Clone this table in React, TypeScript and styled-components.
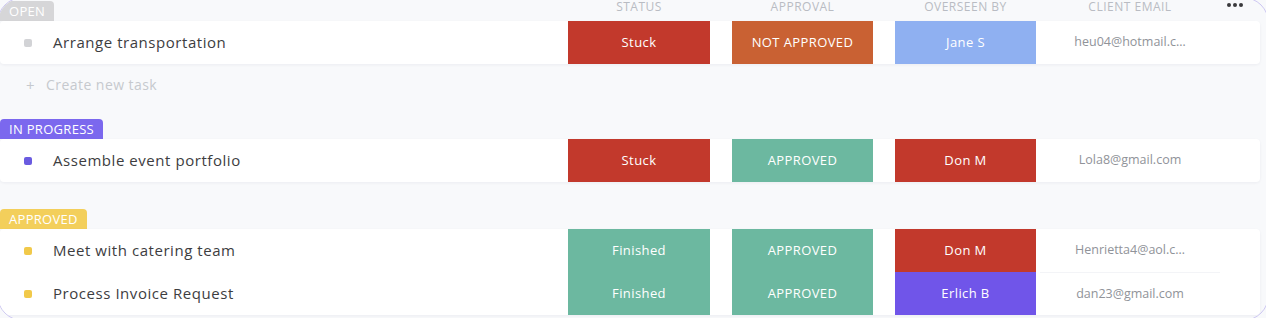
import React from "react";
import styled, { createGlobalStyle } from "styled-components";

const GlobalStyle = createGlobalStyle`
  html, body {
    margin: 0;
    padding: 0;
    width: 1266px;
    height: 318px;
    overflow: hidden;
    background: #f8f9fb;
    font-family: "Open Sans", "Noto Sans", sans-serif;
  }
`;

type Tone = "red" | "orange" | "blue" | "teal" | "purple";

const tones: Record<Tone, string> = {
  red: "#c2392c",
  orange: "#c96133",
  blue: "#8fb0f1",
  teal: "#6cb8a0",
  purple: "#7055e9",
};

interface Task {
  name: string;
  status: { label: string; tone: Tone };
  approval: { label: string; tone: Tone };
  owner: { label: string; tone: Tone };
  email: string;
}

interface Group {
  title: string;
  color: string;
  dot: string;
  tasks: Task[];
  canCreate?: boolean;
}

// emails are shown already shortened, as the list view does for long addresses
const groups: Group[] = [
  {
    title: "OPEN",
    color: "#d6d6d8",
    dot: "#d2d3d6",
    canCreate: true,
    tasks: [
      {
        name: "Arrange transportation",
        status: { label: "Stuck", tone: "red" },
        approval: { label: "NOT APPROVED", tone: "orange" },
        owner: { label: "Jane S", tone: "blue" },
        email: "heu04@hotmail.c…",
      },
    ],
  },
  {
    title: "IN PROGRESS",
    color: "#7b68ee",
    dot: "#6a5be0",
    tasks: [
      {
        name: "Assemble event portfolio",
        status: { label: "Stuck", tone: "red" },
        approval: { label: "APPROVED", tone: "teal" },
        owner: { label: "Don M", tone: "red" },
        email: "Lola8@gmail.com",
      },
    ],
  },
  {
    title: "APPROVED",
    color: "#f3cf5b",
    dot: "#f1c94a",
    tasks: [
      {
        name: "Meet with catering team",
        status: { label: "Finished", tone: "teal" },
        approval: { label: "APPROVED", tone: "teal" },
        owner: { label: "Don M", tone: "red" },
        email: "Henrietta4@aol.c…",
      },
      {
        name: "Process Invoice Request",
        status: { label: "Finished", tone: "teal" },
        approval: { label: "APPROVED", tone: "teal" },
        owner: { label: "Erlich B", tone: "purple" },
        email: "dan23@gmail.com",
      },
    ],
  },
];

const App: React.FC = () => (
  <>
    <GlobalStyle />
    <Frame>
      {groups.map((group, gi) => (
        <Section key={group.title} $first={gi === 0}>
          <HeaderRow>
            <Badge $color={group.color}>{group.title}</Badge>
            {gi === 0 ? (
              <>
                <ColumnTitle $width={142}>STATUS</ColumnTitle>
                <ColumnTitle $width={141}>APPROVAL</ColumnTitle>
                <ColumnTitle $width={141}>OVERSEEN BY</ColumnTitle>
                <ColumnTitle $width={180}>CLIENT EMAIL</ColumnTitle>
                <More>
                  <i />
                  <i />
                  <i />
                </More>
              </>
            ) : null}
          </HeaderRow>
          <Card>
            {group.tasks.map((task, ti) => (
              <TaskRow key={task.name}>
                <TaskName>
                  <Dot $color={group.dot} />
                  {task.name}
                </TaskName>
                <Pill $tone={task.status.tone} $width={142}>
                  {task.status.label}
                </Pill>
                <Pill $tone={task.approval.tone} $width={141}>
                  {task.approval.label}
                </Pill>
                <Pill $tone={task.owner.tone} $width={141}>
                  {task.owner.label}
                </Pill>
                <Email $divided={ti > 0}>{task.email}</Email>
              </TaskRow>
            ))}
          </Card>
          {group.canCreate ? (
            <CreateRow>
              <Plus>+</Plus>
              Create new task
            </CreateRow>
          ) : null}
        </Section>
      ))}
    </Frame>
  </>
);

const Frame = styled.div`
  box-sizing: border-box;
  width: 1272px;
  height: 324px;
  margin: -3px;
  padding: 3px 7px 0 4px;
  border: 1px solid #cdc7f2;
  border-radius: 26px;
  overflow: hidden;
`;

const Section = styled.section<{ $first: boolean }>`
  display: flex;
  flex-direction: column;
  margin-bottom: ${({ $first }) => ($first ? "0" : "27px")};
`;

const HeaderRow = styled.div`
  display: grid;
  grid-template-columns: 568px 164px 163px 145px 180px 1fr;
  align-items: end;
  height: 20px;
  margin-left: -2px;
`;

const Badge = styled.div<{ $color: string }>`
  justify-self: start;
  height: 20px;
  padding: 0 9px;
  display: flex;
  align-items: center;
  background: ${({ $color }) => $color};
  color: #ffffff;
  font-size: 13px;
  font-weight: 500;
  border-radius: 4px 4px 0 0;
  letter-spacing: 0.3px;
`;

const ColumnTitle = styled.div<{ $width: number }>`
  width: ${({ $width }) => $width}px;
  align-self: center;
  margin-top: -10px;
  text-align: center;
  font-size: 12px;
  color: #b9bcc3;
  letter-spacing: 0.5px;
`;

const More = styled.div`
  align-self: center;
  display: flex;
  gap: 2px;
  margin-top: -12px;
  padding-left: 7px;

  i {
    width: 4px;
    height: 4px;
    border-radius: 50%;
    background: #3a3a3c;
  }
`;

const Card = styled.div`
  display: flex;
  flex-direction: column;
  margin-left: -2px;
  margin-right: 1px;
  background: #ffffff;
  border-radius: 4px;
  box-shadow: 0 1px 3px rgba(30, 40, 80, 0.06);
`;

const TaskRow = styled.div`
  display: grid;
  grid-template-columns: 568px 164px 163px 145px 180px 1fr;
  height: 43px;
`;

const TaskName = styled.div`
  display: flex;
  align-items: center;
  gap: 21px;
  padding: 0 0 2px 24px;
  font-size: 15px;
  color: #3d3d3f;
  letter-spacing: 0.55px;
`;

const Dot = styled.span<{ $color: string }>`
  width: 8px;
  height: 8px;
  margin-top: 2px;
  border-radius: 2px;
  background: ${({ $color }) => $color};
`;

const Pill = styled.div<{ $tone: Tone; $width: number }>`
  width: ${({ $width }) => $width}px;
  display: flex;
  align-items: center;
  justify-content: center;
  padding-bottom: 2px;
  box-sizing: border-box;
  background: ${({ $tone }) => tones[$tone]};
  color: #ffffff;
  font-size: 13px;
  font-weight: 500;
  letter-spacing: 0.4px;
`;

const Email = styled.div<{ $divided: boolean }>`
  display: flex;
  align-items: center;
  justify-content: center;
  padding-bottom: 2px;
  white-space: nowrap;
  font-size: 12.5px;
  color: #909399;
  border-top: ${({ $divided }) => ($divided ? "1px solid #f3f4f7" : "none")};
`;

const CreateRow = styled.div`
  display: flex;
  align-items: center;
  gap: 11px;
  height: 41px;
  margin-bottom: 14px;
  padding-left: 24px;
  font-size: 14px;
  color: #c6c9ce;
  letter-spacing: 0.45px;
`;

const Plus = styled.span`
  font-size: 15px;
`;

export default App;
